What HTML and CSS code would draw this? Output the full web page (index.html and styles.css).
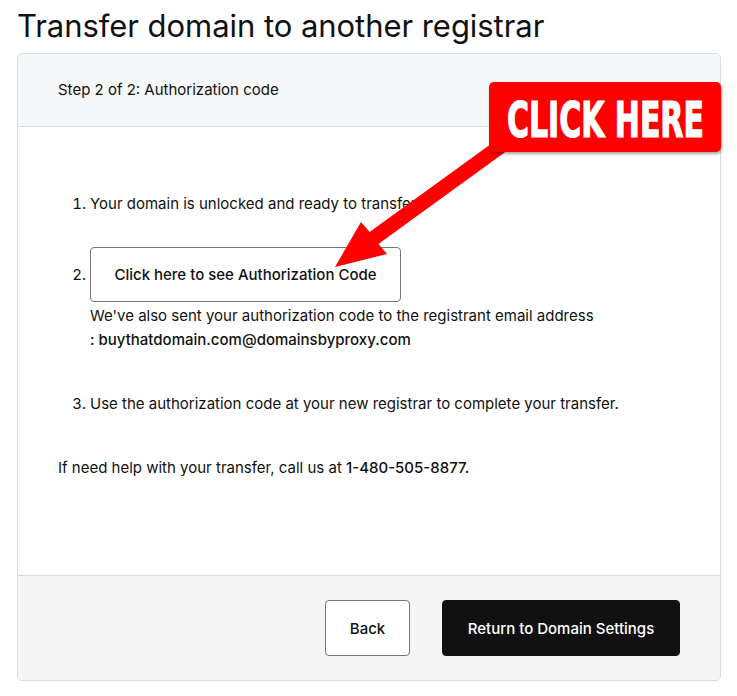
FILE: index.html
```html
<!DOCTYPE html>
<html lang="en">
<head>
<meta charset="utf-8">
<title>Transfer domain to another registrar</title>
<link rel="stylesheet" href="styles.css">
</head>
<body>
<div class="page">
  <h1 class="title">Transfer domain to another registrar</h1>
  <div class="card">
    <div class="card-head">Step 2 of 2: Authorization code</div>
    <div class="card-body">
      <ol class="steps">
        <li class="step step-1">Your domain is unlocked and ready to transfer.</li>
        <li class="step step-2"><button class="auth-btn" type="button">Click here to see Authorization Code</button>
          <div class="note">We've also sent your authorization code to the registrant email address</div>
          <div class="email">: buythatdomain.com@domainsbyproxy.com</div>
        </li>
        <li class="step step-3">Use the authorization code at your new registrar to complete your transfer.</li>
      </ol>
      <p class="help">If need help with your transfer, call us at <strong>1-480-505-8877.</strong></p>
    </div>
    <div class="card-foot">
      <button class="btn btn-outline" type="button">Back</button>
      <button class="btn btn-dark" type="button">Return to Domain Settings</button>
    </div>
  </div>
</div>

<svg class="arrow" width="737" height="696" viewBox="0 0 737 696" aria-hidden="true">
  <polygon fill="#ff0000" points="500.6,136.9 509.4,149.1 378.4,244.1 387,254 335,267 361,222 369.6,231.9"/>
</svg>
<div class="callout">
  <span class="callout-text">CLICK HERE</span>
</div>
</body>
</html>
```
FILE: styles.css
```css
html, body {
  margin: 0;
  padding: 0;
  background: #ffffff;
}
body {
  font-family: "Inter", "Roboto", "Noto Sans", sans-serif;
  color: #111111;
  position: relative;
  width: 737px;
  height: 696px;
  overflow: hidden;
}
.page {
  padding: 8px 16px 0 17px;
}
.title {
  margin: 0 0 9px 0;
  font-size: 31px;
  line-height: 36px;
  font-weight: 400;
  letter-spacing: -0.05px;
  color: #111111;
}
.card {
  border: 1px solid #d6dce0;
  border-radius: 5px;
  overflow: hidden;
  display: flex;
  flex-direction: column;
}
.card-head {
  background: #f5f7f8;
  border-bottom: 1px solid #d6dce0;
  height: 73px;
  box-sizing: border-box;
  padding: 0 40px;
  display: flex;
  align-items: center;
  font-size: 15px;
  line-height: 24px;
  color: #111111;
}
.card-body {
  height: 448px;
  box-sizing: border-box;
  padding: 65px 40px 0 40px;
  font-size: 15px;
  line-height: 24px;
}
.steps {
  margin: 0;
  padding-left: 32px;
}
.step-1 {
  margin-bottom: 31px;
}
.step-3 {
  margin-top: 40px;
}
.auth-btn {
  font-family: inherit;
  font-size: 15px;
  font-weight: 500;
  color: #111111;
  background: #ffffff;
  border: 1px solid #767676;
  border-radius: 4px;
  height: 55px;
  width: 311px;
  padding: 0;
  vertical-align: baseline;
}
.note {
  margin-top: 2px;
}
.email {
  font-weight: 500;
}
.help {
  margin: 40px 0 0 0;
}
.help strong {
  font-weight: 500;
}
.card-foot {
  background: #f5f5f5;
  border-top: 1px solid #d6dce0;
  height: 105px;
  box-sizing: border-box;
  display: flex;
  justify-content: flex-end;
  align-items: center;
  gap: 32px;
  padding: 0 40px 0 0;
}
.btn {
  font-family: inherit;
  font-size: 15px;
  font-weight: 500;
  height: 56px;
  border-radius: 4px;
  padding: 0;
}
.btn-outline {
  width: 85px;
  background: #ffffff;
  color: #111111;
  border: 1px solid #767676;
}
.btn-dark {
  width: 238px;
  background: #111111;
  color: #ffffff;
  border: 1px solid #111111;
}
.arrow {
  position: absolute;
  left: 0;
  top: 0;
  pointer-events: none;
}
.callout {
  position: absolute;
  left: 489px;
  top: 82px;
  width: 232px;
  height: 70px;
  box-sizing: border-box;
  padding-left: 18px;
  background: #ff0000;
  border-radius: 5px;
  box-shadow: 1px 2px 3px rgba(0, 0, 0, 0.35);
  display: flex;
  align-items: center;
}
.callout-text {
  display: block;
  white-space: nowrap;
  font-family: "DejaVu Sans Condensed", "DejaVu Sans", sans-serif;
  font-weight: 700;
  font-size: 33.3px;
  line-height: 40px;
  color: #ffffff;
  -webkit-text-stroke: 0.8px #ffffff;
  transform: translateY(3.5px) scaleY(1.52);
  transform-origin: center;
}
```
